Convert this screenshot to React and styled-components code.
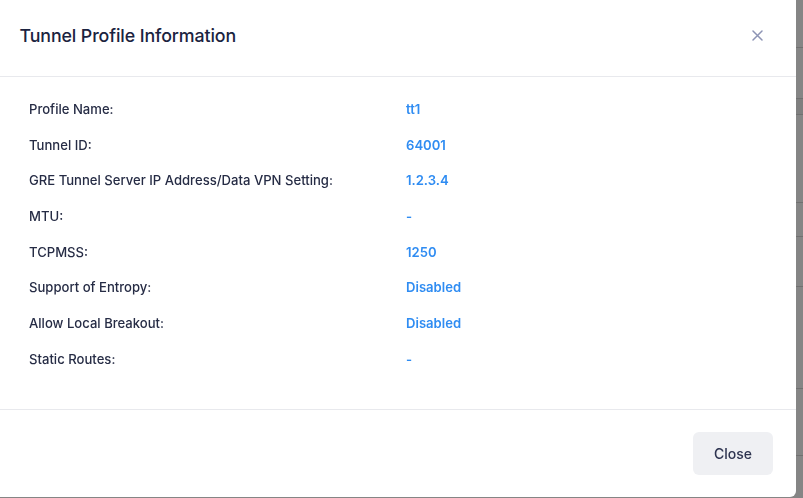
import React from "react";
import styled, { createGlobalStyle } from "styled-components";

const Global = createGlobalStyle`
  html, body { margin: 0; padding: 0; }
  body {
    width: 803px;
    height: 498px;
    overflow: hidden;
    font-family: Inter, "Noto Sans", "Liberation Sans", sans-serif;
    background: #ffffff;
  }
`;

const Page = styled.div`
  width: 803px;
  height: 498px;
  display: flex;
  flex-direction: column;
  background: #fff;
`;

const PageRow = styled.div`
  height: ${(p) => p.h}px;
  border-bottom: 1px solid #d6d6d6;
  background: ${(p) => (p.shade ? "#f4f4f4" : "#ffffff")};
  flex-shrink: 0;
`;

const Backdrop = styled.div`
  position: fixed;
  inset: 0;
  background: rgba(0, 0, 0, 0.48);
`;

const Modal = styled.div`
  position: fixed;
  left: 0;
  top: 0;
  width: 796px;
  height: 497px;
  background: #ffffff;
  border-radius: 0 0 6px 0;
  display: flex;
  flex-direction: column;
  box-sizing: border-box;
`;

const Header = styled.div`
  height: 77px;
  box-sizing: border-box;
  border-bottom: 1px solid #e8e9ed;
  display: flex;
  align-items: center;
  justify-content: space-between;
  padding: 0 33px 0 19.5px;
`;

const Title = styled.h2`
  margin: 0;
  font-size: 17.8px;
  font-weight: 500;
  color: #1b2340;
  letter-spacing: -0.1px;
  padding-bottom: 6px;
`;

const CloseIcon = styled.button`
  border: 0;
  background: transparent;
  padding: 0;
  width: 12px;
  height: 12px;
  display: flex;
  align-items: center;
  justify-content: center;
  cursor: pointer;
  margin-bottom: 6px;
`;

const Body = styled.div`
  flex: 1;
  padding: 14px 29px 0 29px;
  border-bottom: 1px solid #e8e9ed;
`;

const Row = styled.div`
  display: grid;
  grid-template-columns: 377px 1fr;
  height: 35.7px;
  align-items: center;
`;

const Label = styled.span`
  font-size: 13.1px;
  font-weight: 500;
  color: #262c45;
`;

const Value = styled.span`
  font-size: 13.1px;
  font-weight: 600;
  color: #2f8cf2;
`;

const Footer = styled.div`
  height: 87px;
  box-sizing: border-box;
  display: flex;
  justify-content: flex-end;
  align-items: flex-start;
  padding: 22px 23px 0 0;
`;

const Button = styled.button`
  width: 80px;
  height: 43px;
  border: 0;
  border-radius: 6px;
  background: #eff0f3;
  font-family: inherit;
  font-size: 14px;
  font-weight: 500;
  color: #2e3450;
  cursor: pointer;
`;

const rows = [
  ["Profile Name:", "tt1"],
  ["Tunnel ID:", "64001"],
  ["GRE Tunnel Server IP Address/Data VPN Setting:", "1.2.3.4"],
  ["MTU:", "-"],
  ["TCPMSS:", "1250"],
  ["Support of Entropy:", "Disabled"],
  ["Allow Local Breakout:", "Disabled"],
  ["Static Routes:", "-"],
];

const bgRows = [
  { h: 47 },
  { h: 50 },
  { h: 15, shade: true },
  { h: 87 },
  { h: 33 },
  { h: 49 },
  { h: 101 },
  { h: 66 },
];

export default function App() {
  return (
    <>
      <Global />
      <Page>
        {bgRows.map((r, i) => (
          <PageRow key={i} h={r.h} shade={r.shade} />
        ))}
      </Page>
      <Backdrop />
      <Modal>
        <Header>
          <Title>Tunnel Profile Information</Title>
          <CloseIcon aria-label="Close">
            <svg width="11" height="11" viewBox="0 0 11 11">
              <path d="M1 1L10 10M10 1L1 10" stroke="#8d94b5" strokeWidth="1.5" strokeLinecap="round" />
            </svg>
          </CloseIcon>
        </Header>
        <Body>
          {rows.map(([l, v]) => (
            <Row key={l}>
              <Label>{l}</Label>
              <Value>{v}</Value>
            </Row>
          ))}
        </Body>
        <Footer>
          <Button>Close</Button>
        </Footer>
      </Modal>
    </>
  );
}
